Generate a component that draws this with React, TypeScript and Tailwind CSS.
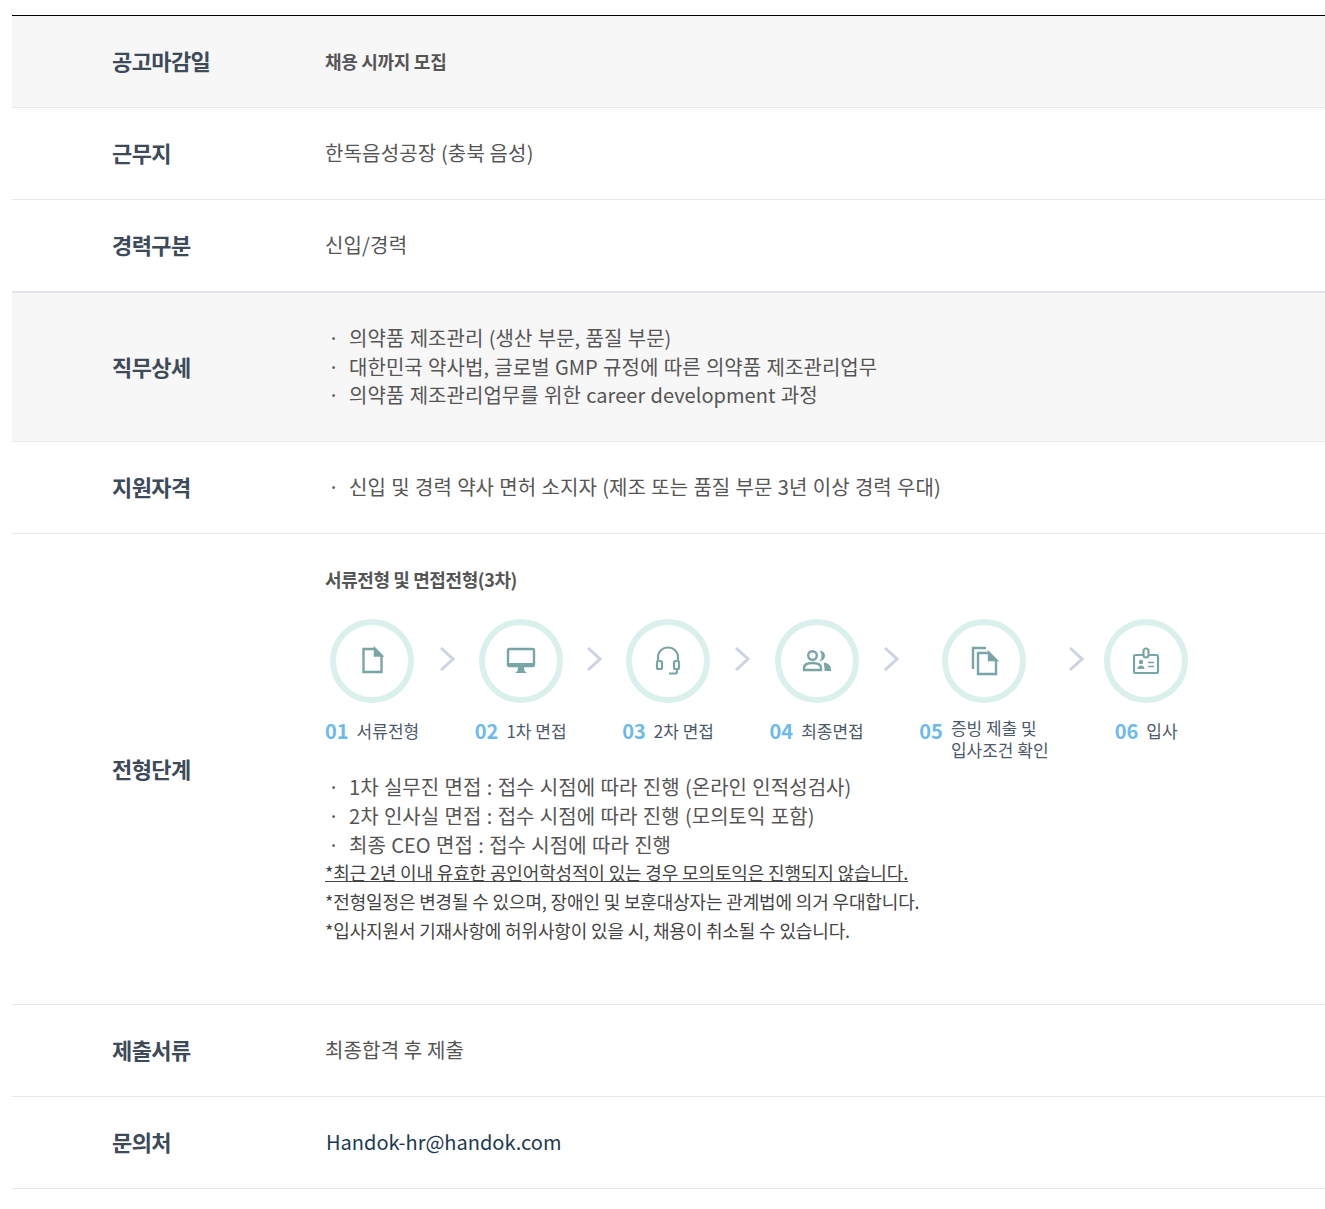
import React from 'react';

const FONT = "font-['Noto_Sans_CJK_KR','Noto_Sans',sans-serif]";

const Row: React.FC<{ label: string; shaded?: boolean; height: string; top?: boolean; thick?: boolean; children: React.ReactNode }> = ({ label, shaded, height, top, thick, children }) => (
  <div className={`flex ${thick ? 'border-b-2 border-[#e1e4ee]' : 'border-b border-[#e8e8ee]'} ${height} ${shaded ? 'bg-[#f7f7f7]' : 'bg-white'}`}>
    <div className="w-[313px] shrink-0 pl-[100px] pb-[3px] self-center text-[22px] leading-[32px] font-bold tracking-[-0.6px] text-[#3c4a59]">{label}</div>
    <div className={`flex-1 text-[#555555] ${top ? 'self-start' : 'self-center'}`}>{children}</div>
  </div>
);

const Bullets: React.FC<{ items: string[] }> = ({ items }) => (
  <ul className="text-[20px] leading-[28.8px] tracking-[0.04px] [word-spacing:0.8px] text-[#555555]">
    {items.map((item) => (
      <li key={item} className="flex">
        <span className="w-6 shrink-0 pl-[3px]">·</span>
        <span>{item}</span>
      </li>
    ))}
  </ul>
);

const ICON = '#7aa5a6';

const FileIcon = () => (
  <svg width="40" height="40" viewBox="0 0 40 40" fill="none" stroke={ICON} strokeWidth="2.4">
    <path d="M11.500 8H23L29.500 14.500V31H11.500Z" />
    <path d="M23 8V14.500H29.500Z" fill={ICON} />
  </svg>
);

const MonitorIcon = () => (
  <svg width="40" height="40" viewBox="0 0 40 40" fill="none" stroke={ICON} strokeWidth="2.4">
    <rect x="7" y="8" width="26" height="17" rx="1.5" />
    <rect x="7" y="22" width="26" height="4" fill={ICON} stroke="none" />
    <path d="M17 26H23L23.500 30L26 32H14L16.500 30Z" fill={ICON} stroke="none" />
  </svg>
);

const HeadsetIcon = () => (
  <svg width="40" height="40" viewBox="0 0 40 40" fill="none" stroke={ICON} strokeWidth="2.2">
    <path d="M10 21V16a10 9.500 0 0 1 20 0V21" />
    <rect x="9" y="20" width="5" height="8" rx="1.5" />
    <rect x="26" y="20" width="5" height="8" rx="1.5" />
    <path d="M29 28V30.500a2 2 0 0 1-2 2H21" />
  </svg>
);

const PeopleIcon = () => (
  <svg width="40" height="40" viewBox="0 0 40 40" fill="none" stroke={ICON} strokeWidth="2.4">
    <circle cx="15.500" cy="14.500" r="4.300" />
    <path d="M7 29V27c0-3.500 4-5 8.500-5s8.500 1.500 8.500 5V29Z" />
    <path d="M22.500 9.500a5.500 5.200 0 0 1 0 10.400c1.500-1.500 2-3.300 2-5.200s-.5-3.700-2-5.200Z" fill={ICON} stroke="none" />
    <path d="M26.500 21.500c5 .5 7.500 3 7.500 7V30H27.500c0-3-.2-6-1-8.500Z" fill={ICON} stroke="none" />
  </svg>
);

const DocsIcon = () => (
  <svg width="40" height="40" viewBox="0 0 40 40" fill="none" stroke={ICON} strokeWidth="2.4">
    <path d="M9 28V7H22" />
    <path d="M14 12H25L32 19V33H14Z" />
    <path d="M25 12V19H32Z" fill={ICON} />
  </svg>
);

const BadgeIcon = () => (
  <svg width="40" height="40" viewBox="0 0 40 40" fill="none" stroke={ICON} strokeWidth="2.2">
    <rect x="8" y="14" width="24" height="18" rx="1.5" />
    <rect x="17.500" y="7.500" width="5" height="9" rx="2.5" fill="#ffffff" />
    <circle cx="15" cy="21" r="2.200" fill={ICON} stroke="none" />
    <path d="M11.500 28c0-2.500 1.500-3.500 3.500-3.500s3.500 1 3.500 3.500Z" fill={ICON} stroke="none" />
    <path d="M22 21.500H28M22 25.500H28" strokeWidth="1.500" />
  </svg>
);

const steps = [
  { no: '01', lines: ['서류전형'], icon: <FileIcon /> },
  { no: '02', lines: ['1차 면접'], icon: <MonitorIcon /> },
  { no: '03', lines: ['2차 면접'], icon: <HeadsetIcon /> },
  { no: '04', lines: ['최종면접'], icon: <PeopleIcon /> },
  { no: '05', lines: ['증빙 제출 및', '입사조건 확인'], icon: <DocsIcon /> },
  { no: '06', lines: ['입사'], icon: <BadgeIcon /> },
];

const Steps = () => (
  <div className="flex items-start h-[126px]">
    {steps.map((step, i) => (
      <React.Fragment key={step.no}>
        <div className="flex flex-col items-center">
          <div className="w-[84px] h-[84px] rounded-full border-[6px] border-[#d9f0ed] flex items-center justify-center">{step.icon}</div>
          <div className="flex items-start gap-[8px] mt-[14px]">
            <span className="text-[20px] leading-[28px] font-bold text-[#6cb9ee]">{step.no}</span>
            <div className={`text-[17px] leading-[22px] text-[#4c5a6b] whitespace-nowrap ${step.lines.length === 1 ? 'mt-[3px]' : ''}`}>
              {step.lines.map((line) => (
                <div key={line}>{line}</div>
              ))}
            </div>
          </div>
        </div>
        {i < steps.length - 1 && (
          <div className="w-[55.6px] h-[80px] flex items-center justify-center">
            <svg width="16" height="26" viewBox="0 0 16 26" fill="none" stroke="#cdd2e4" strokeWidth="3">
              <path d="M2 2L14 13L2 24" />
            </svg>
          </div>
        )}
      </React.Fragment>
    ))}
  </div>
);

export default function App() {
  return (
    <div className={`${FONT} bg-white min-h-[1209px] pl-3 pt-[15px]`}>
      <div className="border-t border-black">
        <Row label="공고마감일" shaded height="h-[92px]">
          <p className="text-[18px] tracking-[-0.3px] font-bold">채용 시까지 모집</p>
        </Row>
        <Row label="근무지" height="h-[92px]">
          <p className="text-[20px] leading-[28px] tracking-[0.15px] pb-[2px]">한독음성공장 (충북 음성)</p>
        </Row>
        <Row label="경력구분" thick height="h-[93px]">
          <p className="text-[20px] leading-[28px] tracking-[0.15px] pb-[2px]">신입/경력</p>
        </Row>
        <Row label="직무상세" shaded height="h-[149px]">
          <Bullets items={['의약품 제조관리 (생산 부문, 품질 부문)', '대한민국 약사법, 글로벌 GMP 규정에 따른 의약품 제조관리업무', '의약품 제조관리업무를 위한 career development 과정']} />
        </Row>
        <Row label="지원자격" height="h-[92px]">
          <Bullets items={['신입 및 경력 약사 면허 소지자 (제조 또는 품질 부문 3년 이상 경력 우대)']} />
        </Row>
        <Row label="전형단계" height="h-[471px]" top>
          <div className="pt-[31px]">
            <p className="text-[18px] leading-[28px] tracking-[-0.4px] font-bold mb-[26px]">서류전형 및 면접전형(3차)</p>
            <Steps />
            <div className="mt-[28px]">
              <Bullets items={['1차 실무진 면접 : 접수 시점에 따라 진행 (온라인 인적성검사)', '2차 인사실 면접 : 접수 시점에 따라 진행 (모의토익 포함)', '최종 CEO 면접 : 접수 시점에 따라 진행']} />
            </div>
            <div className="text-[18px] leading-[29px] tracking-[-0.15px] text-[#444444] -mt-px">
              <p className="underline">*최근 2년 이내 유효한 공인어학성적이 있는 경우 모의토익은 진행되지 않습니다.</p>
              <p>*전형일정은 변경될 수 있으며, 장애인 및 보훈대상자는 관계법에 의거 우대합니다.</p>
              <p>*입사지원서 기재사항에 허위사항이 있을 시, 채용이 취소될 수 있습니다.</p>
            </div>
          </div>
        </Row>
        <Row label="제출서류" height="h-[92px]">
          <p className="text-[20px] leading-[28px] tracking-[0.15px] pb-[2px]">최종합격 후 제출</p>
        </Row>
        <Row label="문의처" height="h-[92px]">
          <p className="text-[20px] leading-[28px] text-[#1b3a52] pl-px pb-[2px]">Handok-hr@handok.com</p>
        </Row>
      </div>
    </div>
  );
}
